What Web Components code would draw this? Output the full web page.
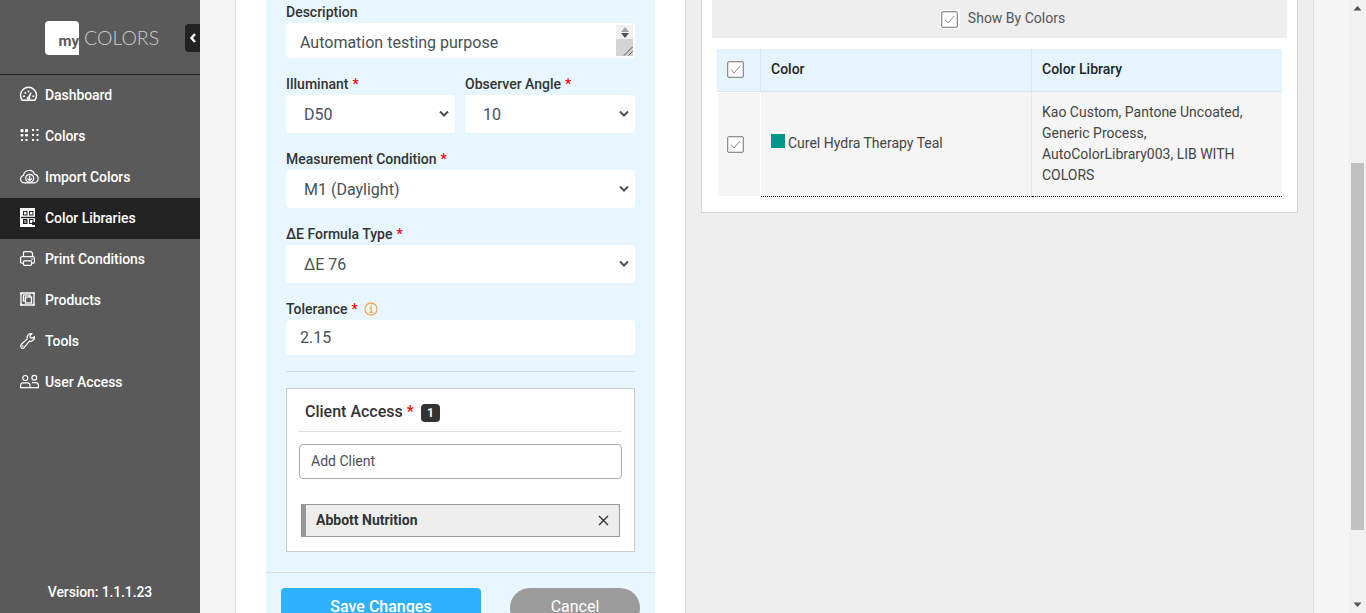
<!DOCTYPE html>
<html><head><meta charset="utf-8"><title>Color Libraries</title>
<style>
html,body{margin:0;padding:0;height:100%;overflow:hidden;background:#f5f5f5;font-family:Roboto,"Liberation Sans",sans-serif}
</style></head><body>
<app-shell>
  <side-nav slot="nav">
    <nav-item icon="dashboard">Dashboard</nav-item>
    <nav-item icon="colors">Colors</nav-item>
    <nav-item icon="import">Import Colors</nav-item>
    <nav-item icon="libraries" active>Color Libraries</nav-item>
    <nav-item icon="print">Print Conditions</nav-item>
    <nav-item icon="products">Products</nav-item>
    <nav-item icon="tools">Tools</nav-item>
    <nav-item icon="users">User Access</nav-item>
  </side-nav>
  <edit-form slot="form"></edit-form>
  <colors-panel slot="panel"></colors-panel>
  <page-scrollbar slot="bar"></page-scrollbar>
</app-shell>
<script>
const def=(name,html)=>{customElements.define(name,class extends HTMLElement{
  constructor(){super();this.attachShadow({mode:'open'}).innerHTML=typeof html==='function'?html(this):html;}
});};

def('app-shell',`<style>
:host{display:flex;height:613px;overflow:hidden}
.nav{flex:0 0 200px;height:613px}
.main{flex:1;min-width:0;height:613px;overflow:hidden;background:#f5f5f5;display:flex;padding-left:35px;padding-right:35px}
.left{flex:0 0 451px;box-sizing:border-box;background:#fff;border-left:1px solid #ddd;border-right:1px solid #ddd;padding:0 29px 0 30px;height:613px;overflow:hidden}
.right{flex:1;min-width:0;background:#eee;padding:0 15px;border-right:1px solid #ddd}
.bar{flex:0 0 17px}
</style>
<div class="nav"><slot name="nav"></slot></div>
<div class="main">
<div class="left"><slot name="form"></slot></div>
<div class="right"><slot name="panel"></slot></div>
</div>
<div class="bar"><slot name="bar"></slot></div>`);

def('page-scrollbar',`<style>
:host{display:flex;flex-direction:column;width:17px;height:613px;background:#f1f1f1}
.a{height:17px;display:flex;align-items:center;justify-content:center}
.track{flex:1;padding:146px 2px 0}
.thumb{height:367px;background:#c1c1c1}
</style>
<div class="a"><svg width="9" height="5" viewBox="0 0 9 5"><path d="M4.500 0L8.500 4.500H.5Z" fill="#505050"/></svg></div>
<div class="track"><div class="thumb"></div></div>
<div class="a"><svg width="9" height="5" viewBox="0 0 9 5"><path d="M4.500 5L8.500 .5H.5Z" fill="#505050"/></svg></div>`);

const ICONS={
dashboard:`<path d="M2.200 15.300A8 8 0 1 1 14.800 15.300Z" fill="none" stroke="#fff" stroke-width="1.500" stroke-linejoin="round"/><path d="M8.500 13.500L11 7.500" stroke="#fff" stroke-width="1.700"/><circle cx="8.500" cy="13.300" r="1.700" fill="#fff"/><g fill="#fff"><rect x="7.700" y="5.500" width="1.600" height="1.800"/><rect x="4.500" y="7" width="1.700" height="1.700"/><rect x="3" y="10.500" width="2" height="1.500"/><rect x="12.300" y="10.500" width="2" height="1.500"/></g>`,
colors:`<g fill="#fff"><rect x="0.500" y="3" width="3" height="3.200" rx="1"/><rect x="5" y="3" width="3" height="3.200" rx="1"/><rect x="0.500" y="8" width="3" height="2.400" rx="1"/><rect x="5" y="8" width="3" height="2.400" rx="1"/><rect x="1" y="13" width="2" height="2"/><rect x="5.500" y="13" width="2" height="2"/><rect x="12" y="3" width="2" height="2"/><rect x="16.500" y="3" width="2" height="2"/><rect x="12" y="8" width="2" height="2"/><rect x="16.500" y="8" width="2" height="2"/><rect x="12" y="13" width="2" height="2"/><rect x="16.500" y="13" width="2" height="2"/></g>`,
import:`<path d="M4.200 15.800A3.700 3.700 0 0 1 3.500 8.500 5.700 5.700 0 0 1 14.500 7.200a4.400 4.400 0 0 1 .3 8.600Z" fill="none" stroke="#fff" stroke-width="1.200"/><circle cx="9.700" cy="11.300" r="4" fill="#5a5a5a" stroke="#fff" stroke-width="1.200"/><path d="M9.700 8.500v5M7.500 11.500l2.200 2.200 2.200-2.200" fill="none" stroke="#fff" stroke-width="1.200"/>`,
libraries:`<rect x="0" y="0" width="15" height="19" fill="#fff"/><g fill="none" stroke="#222" stroke-width="1"><rect x="3.500" y="3.500" width="3.500" height="3.500"/><rect x="9.500" y="3.500" width="3.500" height="3.500"/></g><path d="M1 9.500h14" stroke="#222" stroke-width="1.400"/><rect x="3.500" y="11.500" width="3.500" height="4" fill="#888" stroke="#222"/><rect x="9.500" y="11.500" width="3.500" height="4" fill="none" stroke="#222"/><rect x="12" y="14" width="3" height="3" fill="#222"/>`,
print:`<path d="M3.500 7.500V3.600Q3.500 2.600 4.500 2.600h6.500L12.500 4.100V7.500" fill="none" stroke="#fff" stroke-width="1.200"/><path d="M3.500 14.200H1.800Q.6 14.200 .6 13V9.500Q.6 7.700 2.400 7.700H12.600Q14.400 7.700 14.400 9.500V13Q14.400 14.200 13.200 14.200H11.500" fill="none" stroke="#fff" stroke-width="1.200"/><rect x="3.500" y="11.800" width="8" height="4.600" rx=".8" fill="none" stroke="#fff" stroke-width="1.200"/><circle cx="12" cy="10" r=".8" fill="#fff"/>`,
products:`<g fill="none" stroke="#fff" stroke-width="1.300"><path d="M1.500 3h12M1.500 15h12M1 3.500v11M14 3.500v11"/><rect x="3.500" y="5" width="6.500" height="6"/><rect x="5.500" y="7" width="6" height="6" fill="#5a5a5a"/></g><g fill="#fff"><circle cx="1.300" cy="3.300" r="1.300"/><circle cx="13.700" cy="3.300" r="1.300"/><circle cx="1.300" cy="14.800" r="1.300"/><circle cx="13.700" cy="14.800" r="1.300"/></g>`,
tools:`<path d="M1.200 13.500L7.300 7.700a4 4 0 0 1 4.700-5l-2 2.100.4 1.900 2.100.5 2-1.800a4.100 4.100 0 0 1-5 4.800l-5.500 6.500a2 2 0 0 1-2.800-.1 2 2 0 0 1 0-2.600Z" fill="none" stroke="#fff" stroke-width="1.200" stroke-linejoin="round"/><circle cx="2.700" cy="15" r=".8" fill="#fff"/>`,
users:`<g fill="none" stroke="#fff" stroke-width="1.200"><circle cx="5.300" cy="6" r="2.500"/><path d="M.6 15.700v-2.200Q.6 10.800 3.200 10.800H7.400Q10 10.800 10 13.500V15.700Z"/><circle cx="14.300" cy="5.800" r="2.400"/><path d="M12 10.700h3.500Q18.400 10.700 18.400 13.500V15.700H10"/></g>`
};

def('nav-item',el=>`<style>
:host{display:flex;align-items:center;height:41px;box-sizing:border-box;padding-left:20px;color:#fff;font:500 14px/21px Roboto,"Liberation Sans",sans-serif;letter-spacing:-.06px}
:host([active]){background:#222}
svg{flex:0 0 25px;width:25px;height:21px;overflow:visible}
</style><svg viewBox="0 0 25 21">${ICONS[el.getAttribute('icon')]}</svg><slot></slot>`);

def('side-nav',`<style>
:host{display:flex;flex-direction:column;height:613px;background:#5a5a5a;box-sizing:border-box}
header{height:74px;border-bottom:1px solid #222;display:flex;align-items:flex-start;position:relative}
.logo{display:flex;margin:20px 0 0 45px;align-items:center}
.box{width:34px;height:34px;background:#fff;border-radius:4px 4px 0 4px;box-sizing:border-box;display:flex;justify-content:flex-end;align-items:flex-end;color:#5a5a5a;font:700 15px/20px Roboto,sans-serif;padding-bottom:4px}
.word{font:300 19.500px/34px Lato,sans-serif;color:#ccc;margin-left:5px;margin-top:1px}
.toggle{position:absolute;left:185px;top:24px;width:15px;height:28px;background:#222;border-radius:4px 0 0 4px;display:flex;align-items:center;justify-content:center}
.items{display:flex;flex-direction:column}
.ver{margin-top:auto;height:31px;color:#fff;font:500 14px/21px Roboto,sans-serif;text-align:center;letter-spacing:-.12px}
</style>
<header><div class="logo"><div class="box">my</div><div class="word">COLORS</div></div>
<div class="toggle"><svg width="8" height="10" viewBox="0 0 8 10"><path d="M6 1L2.500 5 6 9" fill="none" stroke="#fff" stroke-width="2.400"/></svg></div></header>
<div class="items"><slot></slot></div>
<div class="ver">Version: 1.1.1.23</div>`);

def('form-field',el=>`<style>
:host{display:block;margin-bottom:16px;min-width:0}
label{display:flex;align-items:center;font:500 14px/21px Roboto,sans-serif;color:#333;white-space:pre}
b{color:#f00;font-weight:500;margin-left:4px}
::slotted(*){display:block}
svg{margin-left:6px;margin-top:-2px}
</style><label>${el.getAttribute('label')}${el.hasAttribute('req')?'<b>*</b>':''}${el.hasAttribute('info')?'<svg width="14" height="14" viewBox="0 0 14 14"><circle cx="7" cy="7" r="6" fill="none" stroke="#f6a75a" stroke-width="1.300"/><path d="M5.500 6h1.700v4M5.300 10.300h3.600M7 3.300v1.500" fill="none" stroke="#f6a75a" stroke-width="1.300"/></svg>':''}</label><slot></slot>`);

def('select-box',el=>`<style>
:host{display:block;position:relative}
select{display:block;width:100%;height:38px;border:0;border-radius:4px;background:#fff;color:#495057;font:400 16px/24px Roboto,sans-serif;padding:8px 14px 6px 18px;box-sizing:border-box;outline:0;appearance:none;-webkit-appearance:none}
svg{position:absolute;right:6px;top:15px;pointer-events:none}
</style><select><option>${el.getAttribute('value')}</option></select><svg width="10" height="8" viewBox="0 0 10 8"><path d="M1 1.500L5 5.500 9 1.500" fill="none" stroke="#4a4f55" stroke-width="2"/></svg>`);

def('note-area',el=>`<style>
:host{display:block;position:relative;height:35px}
textarea{display:block;width:100%;height:35px;border:0;border-radius:4px;background:#fff;color:#495057;font:400 16px/24px Roboto,sans-serif;padding:8px 14px 3px;box-sizing:border-box;overflow:hidden;outline:0;resize:none;margin:0}
.sb{position:absolute;right:2px;top:2px;width:17px;height:31px;display:flex;flex-direction:column;pointer-events:none}
.up{height:14px;background:#f1f1f1;display:flex;flex-direction:column;align-items:center;justify-content:center;gap:1px}
.th{flex:1;background:#d4d4d4;position:relative}
.th svg{position:absolute;right:0;bottom:0}
</style><textarea>${el.getAttribute('value')}</textarea>
<div class="sb"><div class="up"><svg width="8" height="5" viewBox="0 0 8 5"><path d="M4 0L8 5H0Z" fill="#a3a3a3"/></svg><svg width="8" height="5" viewBox="0 0 8 5"><path d="M4 5L8 0H0Z" fill="#505050"/></svg></div>
<div class="th"><svg width="10" height="10" viewBox="0 0 10 10"><path d="M1 9.500L9.500 1M5.500 9.500L9.500 5.500" stroke="#555" stroke-width="1"/></svg></div></div>`);

def('check-box',`<style>
:host{display:inline-block;width:17px;height:17px;box-sizing:border-box;border:1px solid #8f8f8f;border-radius:2px;background:#fff;line-height:0;box-shadow:inset 0 0 0 .5px #bbb}
svg{display:block}
</style><svg width="15" height="15" viewBox="0 0 15 15"><path d="M3 7.500l3 3.500 6-7" fill="none" stroke="#888" stroke-width="1"/></svg>`);

def('edit-form',`<style>
:host{display:block;background:#e8f7ff;width:389px;height:613px;box-sizing:border-box;padding-top:2px;font-family:Roboto,sans-serif}
.body{padding:0 20px}
.row{display:grid;grid-template-columns:169px 170px;column-gap:10px}
.value{height:35px;background:#fff;border-radius:4px;color:#495057;font:400 16px/35px Roboto,sans-serif;padding-left:14px}
hr{border:0;border-top:1px solid #cfdde4;margin:16px 0}
.foot{border-top:1px solid #ddd;margin-top:20px;padding:15px 15px;display:flex;justify-content:space-between}
.btn{height:40px;color:#fff;font:500 16px/38px Roboto,sans-serif;text-align:center}
.save{width:200px;background:#2eb2ff;border-radius:4px 4px 0 0}
.cancel{width:130px;background:#9b9b9b;border-radius:20px;font-weight:400}
</style>
<div class="body">
<form-field label="Description"><note-area value="Automation testing purpose"></note-area></form-field>
<div class="row"><form-field label="Illuminant" req><select-box value="D50"></select-box></form-field>
<form-field label="Observer Angle" req><select-box value="10"></select-box></form-field></div>
<form-field label="Measurement Condition" req><select-box value="M1 (Daylight)"></select-box></form-field>
<form-field label="ΔE Formula Type" req><select-box value="ΔE 76"></select-box></form-field>
<form-field label="Tolerance" req info><div class="value">2.15</div></form-field>
<hr>
<client-access></client-access>
</div>
<div class="foot"><div class="btn save">Save Changes</div><div class="btn cancel">Cancel</div></div>`);

def('client-access',`<style>
:host{display:block;background:#fff;border:1px solid #ccc;height:164px;box-sizing:border-box;padding:0 12px}
.t{display:flex;align-items:center;height:38px;padding-top:4px;border-bottom:1px solid #ddd;padding-left:6px;font:500 16px/24px Roboto,sans-serif;color:#333}
b{color:#f00;font-weight:500;margin-left:4px}
.n{margin-left:7px;width:19px;height:18px;border-radius:4px;background:#333;color:#fff;font:700 12px/18px Roboto,sans-serif;text-align:center;margin-top:2px}
.add{margin-top:12px;height:35px;box-sizing:border-box;border:1px solid #aaa;border-radius:4px;font:400 14px/33px Roboto,sans-serif;color:#495057;padding-left:11px}
.chip{margin:25px 2px 0;height:33px;box-sizing:border-box;border:1px solid #999;border-left-width:5px;background:#eee;display:flex;align-items:center;justify-content:space-between;padding:0 10px;font:700 14px/21px Roboto,sans-serif;color:#333}
svg{display:block}
</style>
<div class="t">Client Access<b>*</b><span class="n">1</span></div>
<div class="add">Add Client</div>
<div class="chip"><span>Abbott Nutrition</span><svg width="11" height="11" viewBox="0 0 11 11"><path d="M1 1l9 9M10 1l-9 9" stroke="#333" stroke-width="1.400" fill="none"/></svg></div>`);

def('colors-panel',`<style>
:host{display:block;background:#fff;border:1px solid #dcd2d2;border-top:0;box-sizing:border-box;height:213px;padding:0 10px;font:400 14px/21px Roboto,sans-serif;color:#444}
.bar{height:38px;background:#eee;display:flex;align-items:center;justify-content:center;gap:8px;color:#555;margin-bottom:11px;padding-left:6px}
.cb{background:#fff;width:20px;height:19px;display:flex;align-items:center;justify-content:center}
.bar span:last-child{margin-top:-2px}
.table{margin:0 5px;display:grid;grid-template-columns:44px 271px 1fr}
.h{background:#e6f5fd;height:43px;box-sizing:border-box;border-bottom:1px solid #d8e6ee;border-right:1px solid #d8e6ee;font-weight:500;color:#212529;padding:0 10px 2px;display:flex;align-items:center}
.h.end,.c.end{border-right:0}
.h.ck{padding:0 0 1px 10px}
.c0{background:#f5f5f5;margin:1px;display:flex;align-items:center;padding-left:9px}
.c{background:#f5f5f5;border-bottom:1px dotted #000;border-right:1px solid #e3e3e8;padding:10px;box-sizing:border-box;height:105px}
.name{display:flex;align-items:center;height:82px}
.sw{width:14px;height:14px;background:#009688;margin-right:3px;margin-top:-4px}
</style>
<div class="bar"><span class="cb"><check-box></check-box></span><span>Show By Colors</span></div>
<div class="table">
<div class="h ck"><check-box></check-box></div><div class="h">Color</div><div class="h end">Color Library</div>
<div class="c0"><check-box></check-box></div>
<div class="c"><div class="name"><span class="sw"></span>Curel Hydra Therapy Teal</div></div>
<div class="c end">Kao Custom, Pantone Uncoated, Generic Process, AutoColorLibrary003, LIB WITH COLORS</div>
</div>`);
</script>
</body></html>
